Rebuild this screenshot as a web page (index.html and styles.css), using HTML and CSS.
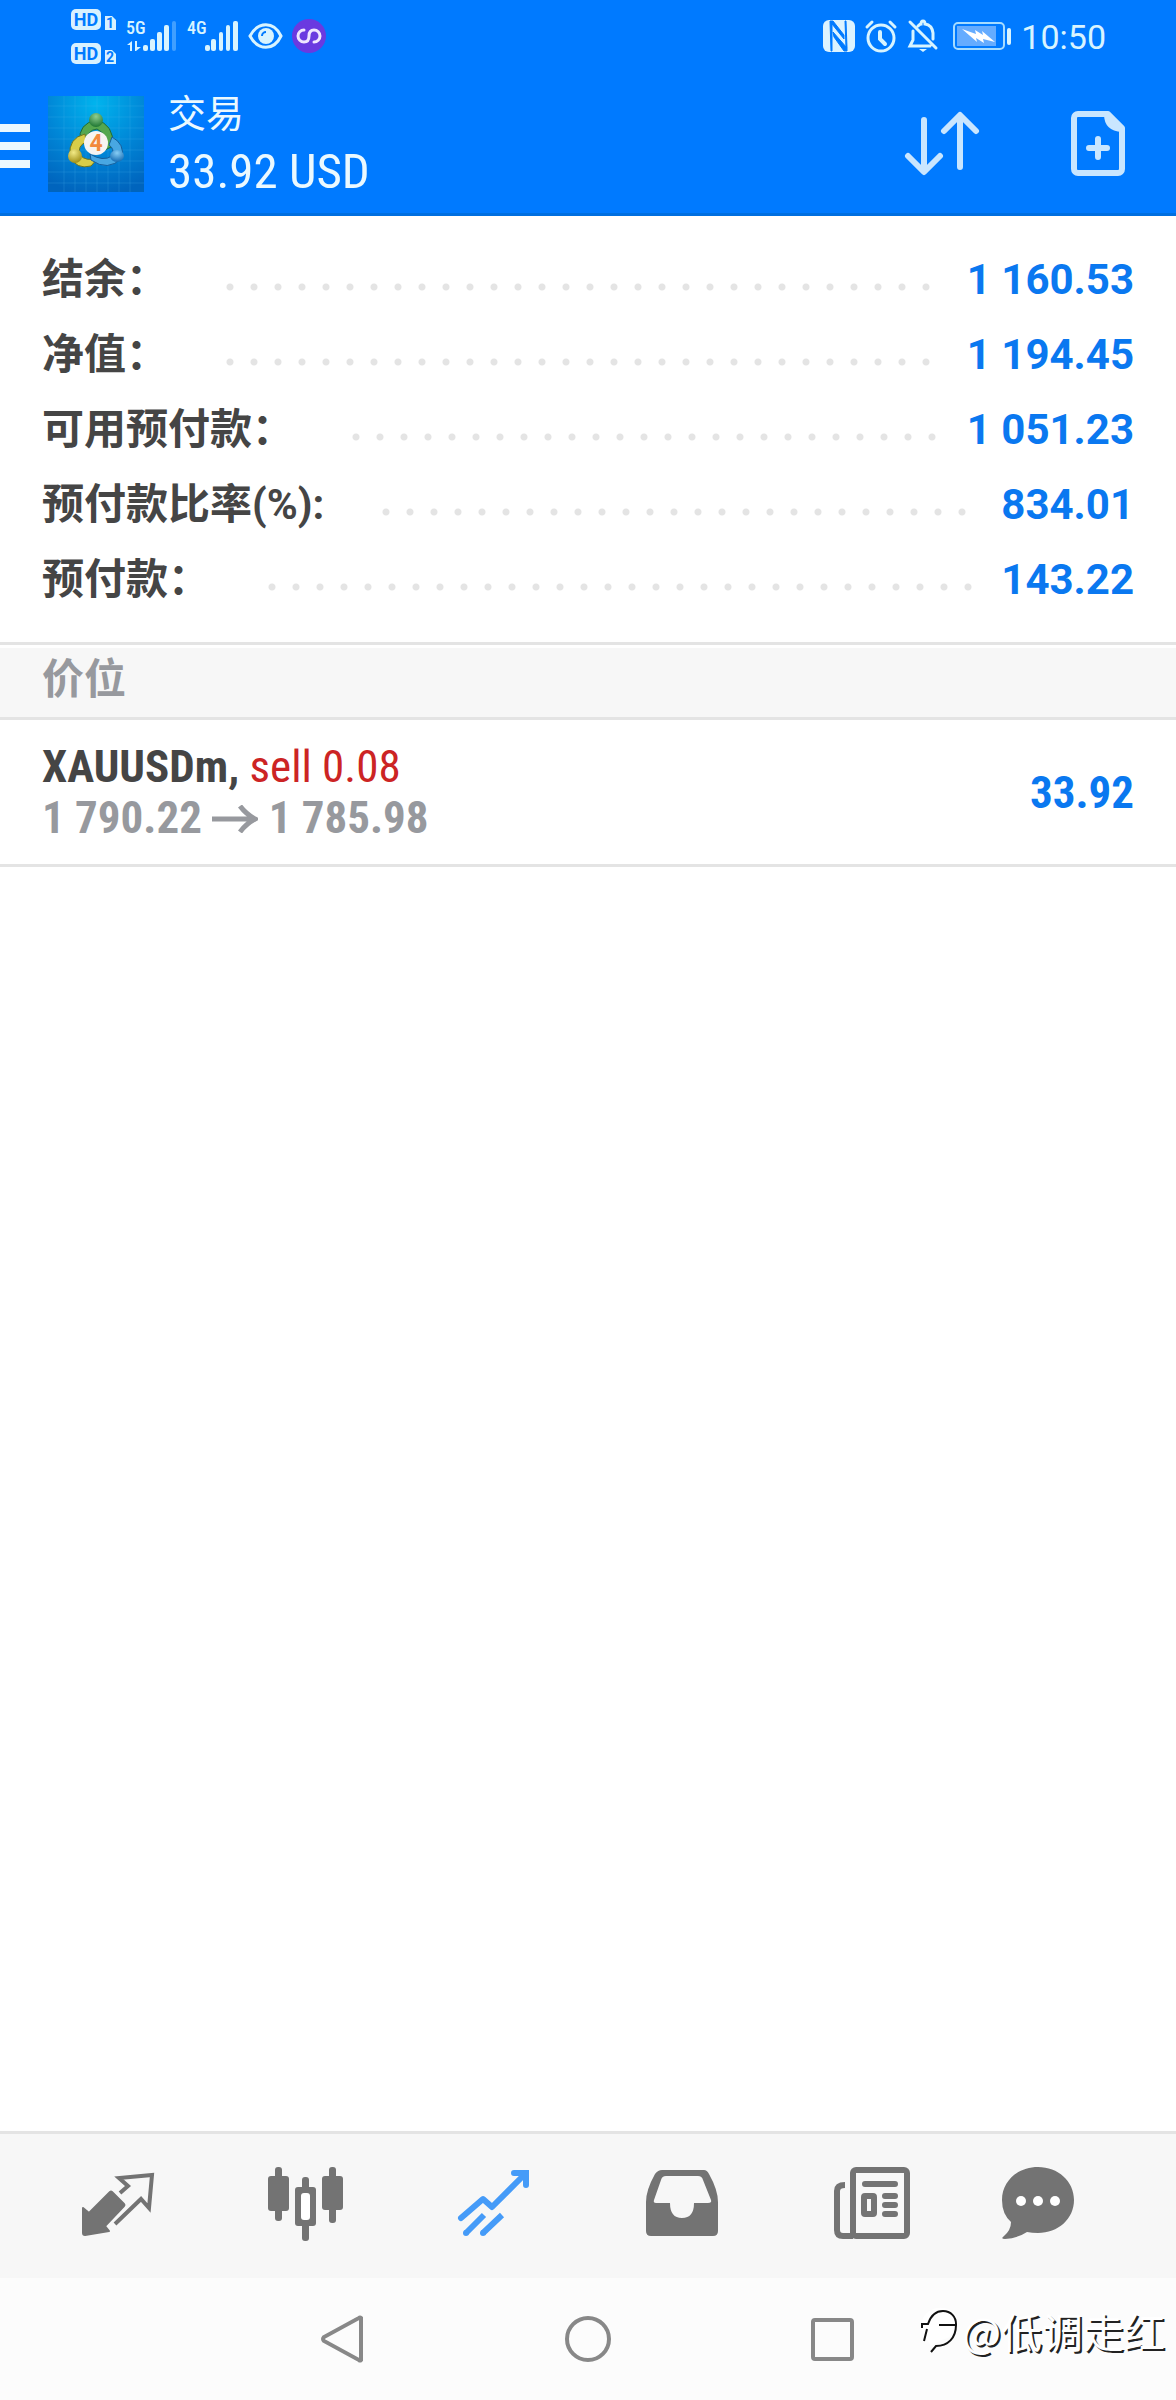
FILE: index.html
```html
<!DOCTYPE html>
<html lang="zh-CN">
<head>
<meta charset="utf-8">
<meta name="viewport" content="width=device-width, initial-scale=1">
<title>交易</title>
<link rel="stylesheet" href="styles.css">
</head>
<body>
<header class="top">
  <div class="status">
    <div class="status-group">
      <svg class="hd" width="48" height="60" viewBox="0 0 48 60" aria-hidden="true">
        <rect x="1" y="3" width="30" height="21" rx="5" fill="#d8f1ff"/>
        <text x="16" y="20" class="hd-text">HD</text>
        <path d="M35 10h7l4 4v10H35z" fill="#d8f1ff"/>
        <text x="40" y="22" class="hd-num">1</text>
        <rect x="1" y="37" width="30" height="21" rx="5" fill="#d8f1ff"/>
        <text x="16" y="54" class="hd-text">HD</text>
        <path d="M35 44h7l4 4v10H35z" fill="#d8f1ff"/>
        <text x="40" y="56" class="hd-num">2</text>
      </svg>
      <svg width="52" height="48" viewBox="0 -8 52 48" fill="#d8f4ff" aria-hidden="true">
        <text x="0" y="14" class="net-text">5G</text>
        <path d="M1 25l5-4v10H4v-6zM9 21h2v6h4l-5 4H9z"/>
        <rect x="17" y="25" width="5" height="6" rx="2"/>
        <rect x="24" y="19" width="5" height="12" rx="2"/>
        <rect x="31" y="12" width="5" height="19" rx="2"/>
        <rect x="38" y="5" width="5" height="26" rx="2"/>
        <rect x="46" y="1" width="4" height="30" rx="2" opacity=".3"/>
      </svg>
      <svg width="54" height="48" viewBox="0 -8 54 48" fill="#d8f4ff" aria-hidden="true">
        <text x="1" y="14" class="net-text">4G</text>
        <rect x="19" y="25" width="5" height="6" rx="2"/>
        <rect x="25" y="19" width="5" height="12" rx="2"/>
        <rect x="33" y="12" width="4" height="19" rx="2"/>
        <rect x="40" y="5" width="4" height="26" rx="2"/>
        <rect x="47" y="1" width="5" height="30" rx="2"/>
      </svg>
      <svg width="36" height="32" viewBox="0 0 36 32" aria-hidden="true">
        <path d="M2 16C10 1 26 1 33 16C26 31 10 31 2 16z" fill="none" stroke="#d8f4ff" stroke-width="3"/>
        <circle cx="18" cy="16" r="8" fill="#d8f4ff"/>
        <path d="M14 16a4 4 0 0 1 4-4" fill="none" stroke="#007aff" stroke-width="2"/>
      </svg>
      <svg width="34" height="34" viewBox="0 0 34 34" aria-hidden="true">
        <circle cx="17" cy="17" r="17" fill="#6a3ae0"/>
        <path d="M12 11a6 6 0 0 0 0 12q5 0 5-6t5-6a6 6 0 0 1 0 12" fill="none" stroke="#efe6ff" stroke-width="3" stroke-linecap="round"/>
      </svg>
    </div>
    <div class="status-group">
      <svg width="32" height="32" viewBox="0 0 32 32" aria-hidden="true">
        <rect x="0" y="0" width="32" height="32" rx="6" fill="#dcf3ff"/>
        <path d="M7 1h3l11 14v4L9 4v27H8zM10 12l14 16v3h-3L11 17zM22 1h1l1 27h-1z" fill="#007aff" stroke="#007aff"/>
      </svg>
      <svg width="36" height="34" viewBox="0 0 36 34" fill="none" stroke="#d8f4ff" stroke-width="3" stroke-linecap="round" aria-hidden="true">
        <circle cx="18" cy="19" r="13"/>
        <path d="M17 13v7l5 5" stroke-width="4"/>
        <path d="M4 8l5-5M32 8l-5-5"/>
      </svg>
      <svg width="32" height="34" viewBox="0 0 32 34" fill="none" stroke="#d8f4ff" stroke-width="3" stroke-linecap="round" aria-hidden="true">
        <path d="M11 7Q13 5 14 5Q14 2 16 2t2 3Q25 6 26 14v6M6 12v9l-3 6h20M3 3l26 26"/>
        <path d="M12 30h8l-4 3z" fill="#d8f4ff" stroke="none"/>
      </svg>
      <svg width="66" height="28" viewBox="0 0 66 28" aria-hidden="true">
        <rect x="7" y="1" width="50" height="26" rx="4" fill="none" stroke="#a6dcff" stroke-width="2"/>
        <rect x="10" y="4" width="39" height="20" fill="#65acff"/>
        <path d="M15 7l14 5-1-4 8 5-1-4 13 11-12-3 1 4-8-5 1 4z" fill="#fff"/>
        <rect x="60" y="6" width="4" height="17" rx="2" fill="#d8f4ff"/>
      </svg>
      <time class="clock">10:50</time>
    </div>
  </div>
  <div class="appbar">
    <button class="icon-btn menu" aria-label="菜单">
      <svg width="30" height="44" viewBox="0 0 30 44" fill="#ebf8ff"><path d="M0 0h30v8H0zM0 18h30v8H0zM0 36h30v8H0z"/></svg>
    </button>
    <svg class="logo" width="96" height="96" viewBox="0 0 96 96" aria-hidden="true">
      <defs>
        <radialGradient id="sky" cx=".5" cy=".08" r=".95"><stop offset="0" stop-color="#00b4ee"/><stop offset=".55" stop-color="#0085d6"/><stop offset="1" stop-color="#0064bd"/></radialGradient>
        <radialGradient id="green" cx=".5" cy=".25" r=".8"><stop offset="0" stop-color="#8fce90"/><stop offset="1" stop-color="#17702c"/></radialGradient>
        <radialGradient id="yellow" cx=".4" cy=".25" r=".8"><stop offset="0" stop-color="#f2ea86"/><stop offset="1" stop-color="#9b8a10"/></radialGradient>
        <radialGradient id="blue" cx=".5" cy=".25" r=".8"><stop offset="0" stop-color="#86cdf5"/><stop offset="1" stop-color="#0d64ae"/></radialGradient>
      </defs>
      <rect width="96" height="96" fill="url(#sky)"/>
      <path d="M16 0v96M27 0v96M38 0v96M49 0v96M60 0v96M71 0v96M82 0v96M0 10h96M0 21h96M0 32h96M0 43h96M0 54h96M0 65h96M0 76h96M0 87h96" stroke="#48b8f0" stroke-opacity=".22"/>
      <path d="M32 45Q30 28 48 24Q66 28 65 50L57 54Q60 38 49 33Q39 34 38 46z" fill="#55a74f" stroke="#1c6b38"/>
      <path d="M37 38Q20 42 22 60Q28 74 43 70L50 62Q38 66 32 59Q29 50 38 46z" fill="#d8cd48" stroke="#6c741e"/>
      <path d="M64 41Q77 48 74 62Q60 76 43 64L42 58Q55 66 64 60Q67 53 61 49z" fill="#48a7e2" stroke="#155d9a"/>
      <circle cx="48" cy="24" r="7" fill="url(#green)"/>
      <circle cx="27" cy="60" r="7" fill="url(#yellow)"/>
      <ellipse cx="69" cy="60" rx="7" ry="6" fill="url(#blue)"/>
      <circle cx="48" cy="47" r="12" fill="#f6f4f1"/>
      <text x="48" y="55" class="logo-num">4</text>
    </svg>
    <div class="heading">
      <h1 class="title">交易</h1>
      <p class="profit">33.92 USD</p>
    </div>
    <div class="actions">
      <button class="icon-btn" aria-label="排序">
        <svg width="76" height="68" viewBox="0 0 76 68" fill="none" stroke="#c9e6ff" stroke-width="6" stroke-linecap="round" stroke-linejoin="round"><path d="M20 10v51M4 46l16 16l16-16M56 57V6M40 21L56 5l16 16"/></svg>
      </button>
      <button class="icon-btn" aria-label="新订单">
        <svg width="56" height="68" viewBox="0 0 56 68" fill="none" stroke="#c9e6ff" stroke-width="6" stroke-linejoin="round"><path d="M8 4h30l14 14v41a4 4 0 0 1-4 4H8a4 4 0 0 1-4-4V8a4 4 0 0 1 4-4z"/><path d="M34 4q0 17 18 18V17L39 4z" fill="#c9e6ff" stroke="none"/><path d="M28 29v18M19 38h18" stroke-linecap="round"/></svg>
      </button>
    </div>
  </div>
</header>

<main class="content">
  <dl class="summary">
    <div class="row"><dt>结余：</dt><dd>1 160.53</dd></div>
    <div class="row"><dt>净值：</dt><dd>1 194.45</dd></div>
    <div class="row"><dt>可用预付款：</dt><dd>1 051.23</dd></div>
    <div class="row"><dt>预付款比率(%):</dt><dd>834.01</dd></div>
    <div class="row"><dt>预付款：</dt><dd>143.22</dd></div>
  </dl>
  <h2 class="section">价位</h2>
  <article class="position">
    <div class="deal">
      <p class="line symbol">XAUUSDm, <span class="sell">sell 0.08</span></p>
      <p class="line prices">1 790.22
        <svg class="arrow" width="46" height="28" viewBox="0 0 46 28" role="img" aria-label="至"><path d="M0 14h42M28 1q6 8 15 13q-9 5-15 13" fill="none" stroke="currentColor" stroke-width="5"/></svg>
        1 785.98</p>
    </div>
    <p class="gain">33.92</p>
  </article>
</main>

<nav class="tabs" aria-label="主导航">
  <a class="tab" href="#quotes" aria-label="行情">
    <svg width="80" height="80" viewBox="0 0 80 80"><path d="M5 42l6 5 21-21q1-1 2 0l12 12q1 1 0 2L27 60l4 5-24 4q-2 0-2-2z" fill="currentColor" stroke="currentColor" stroke-width="2" stroke-linejoin="round"/><path d="M37 58L63 33l8 9 3-33-33 3 9 8-8 7" fill="none" stroke="currentColor" stroke-width="4"/></svg>
  </a>
  <a class="tab" href="#chart" aria-label="图表">
    <svg width="80" height="80" viewBox="0 0 80 80" fill="currentColor"><rect x="9" y="1" width="7" height="54" rx="3"/><rect x="2" y="10" width="21" height="35" rx="3"/><rect x="36" y="11" width="7" height="64" rx="3"/><rect x="29" y="21" width="21" height="39" rx="3"/><rect x="35" y="27" width="9" height="27" rx="3" fill="#fff"/><rect x="63" y="1" width="7" height="56" rx="3"/><rect x="56" y="10" width="21" height="34" rx="3"/></svg>
  </a>
  <a class="tab active" href="#trade" aria-label="交易" aria-current="page">
    <svg width="80" height="80" viewBox="0 0 80 80" fill="none" stroke="currentColor" stroke-width="6"><path d="M7 52l22-19 9 8L71 8" stroke-linecap="round" stroke-linejoin="round"/><path d="M60 7h12v12" stroke-linecap="round"/><path d="M63 4h9q3 0 3 3v9z" fill="currentColor" stroke="none"/><path d="M12 67l18-18M29 67l19-18"/><circle cx="12" cy="67" r="3" fill="currentColor" stroke="none"/><circle cx="29" cy="67" r="3" fill="currentColor" stroke="none"/></svg>
  </a>
  <a class="tab" href="#history" aria-label="历史">
    <svg width="80" height="80" viewBox="0 0 80 80"><path fill="currentColor" fill-rule="evenodd" d="M20 4h42q3 0 5 4 9 16 9 28v29q0 5-5 5H9q-5 0-5-5V36Q4 24 13 8q3-4 7-4zM24 10q-4 0-5 4l-7 20q-1 3 2 3h14q0 15 12 15t12-15h14q4 0 3-3l-8-20q-1-4-5-4z"/></svg>
  </a>
  <a class="tab" href="#news" aria-label="新闻">
    <svg width="80" height="80" viewBox="0 0 80 80" fill="none" stroke="currentColor" stroke-width="6"><rect x="23" y="4" width="54" height="66" rx="3"/><path d="M15 19q-8 0-8 6v39q0 6 6 6h10"/><path d="M35 18h30M55 30h10M55 39h10M55 48h10" stroke-linecap="round"/><rect x="34" y="30" width="10" height="18" rx="1"/></svg>
  </a>
  <a class="tab" href="#chat" aria-label="消息">
    <svg width="80" height="80" viewBox="0 0 80 80"><path fill="currentColor" d="M40 1c20 0 36 14 36 33S60 67 40 67q-6 0-11-1-9 6-22 7-5 0-1-3 7-6 7-14Q4 48 4 34C4 15 20 1 40 1z"/><g fill="#fff"><circle cx="23" cy="35" r="5"/><circle cx="40" cy="35" r="5"/><circle cx="57" cy="35" r="5"/></g></svg>
  </a>
</nav>

<footer class="system">
  <div class="system-keys">
    <button class="icon-btn" aria-label="返回"><svg width="48" height="48" viewBox="0 0 48 48" class="key"><path d="M42 3v42q-1 1-2 0L5 26q-2-2 0-4L40 3q1-1 2 0z"/></svg></button>
    <button class="icon-btn" aria-label="主页"><svg width="48" height="48" viewBox="0 0 48 48" class="key"><circle cx="24" cy="24" r="21"/></svg></button>
    <button class="icon-btn" aria-label="最近任务"><svg width="48" height="48" viewBox="0 0 48 48" class="key"><rect x="4" y="5" width="39" height="39" rx="2"/></svg></button>
  </div>
  <div class="watermark">
    <svg width="42" height="48" viewBox="0 0 42 48" fill="none" aria-hidden="true"><path d="M24 2C10 0 0 12 3 24l9 16 10-6c22-4 22-30 2-32z" fill="#fff"/><path d="M3 22v-4h6C12 9 18 5 24 5c8 0 13 6 13 13M20 19h17c0 13-8 21-20 21l-5 6M8 23L5 35" stroke="#111" stroke-width="2"/></svg>
    <span>@低调走红</span>
  </div>
</footer>
</body>
</html>
```
FILE: styles.css
```css
* { box-sizing: border-box; margin: 0; }

body {
  display: flex;
  flex-direction: column;
  min-height: 100vh;
  background: #fff;
  color: #454545;
  font-family: Roboto, "Noto Sans CJK SC", sans-serif;
}

svg { display: block; flex: none; }

.icon-btn {
  display: block;
  padding: 0;
  border: 0;
  background: none;
}

/* Header */
.top {
  background: #007aff;
  border-bottom: 3px solid #006fe0;
  color: #ebf9ff;
}

.status {
  display: flex;
  justify-content: space-between;
  align-items: center;
  height: 72px;
  padding: 0 70px;
}

.status-group { display: flex; align-items: center; gap: 8px; }

.hd-text, .hd-num {
  fill: #007aff;
  font-weight: 700;
  text-anchor: middle;
}
.hd-text { font-size: 18px; }
.hd-num { font-size: 14px; }
.net-text { font-family: "Roboto Condensed", Roboto, sans-serif; font-size: 18px; font-weight: 500; }

.clock { padding-top: 2px; font-size: 34px; line-height: 40px; color: #d8f4ff; }

.appbar {
  display: flex;
  align-items: center;
  height: 141px;
  padding: 3px 50px 0 0;
}

.menu { padding-top: 4px; margin-right: 18px; }
.logo { margin-right: 24px; }
.logo-num { fill: #f28a3c; font-size: 23px; font-weight: 700; text-anchor: middle; }

.title { font-size: 38px; line-height: 56px; font-weight: 400; }
.profit {
  font-family: "Roboto Condensed", Roboto, sans-serif;
  font-size: 49px;
  line-height: 60px;
}

.actions { display: flex; align-items: center; gap: 90px; margin-left: auto; }

/* Account summary */
.summary {
  padding: 26px 42px 25px;
  line-height: 75px;
  border-bottom: 3px solid #e4e4e4;
}

.row {
  display: flex;
  font-size: 42px;
  font-weight: 700;
}

.row dt { order: 1; }
.row dd { order: 3; color: #0a78f0; }
.row::after {
  content: "";
  order: 2;
  flex: 1;
  height: 24px;
  margin: 33px 24px 0 50px;
  background: radial-gradient(circle, #e4e4e4 3px, transparent 4px) 0 0 / 24px 24px;
}

/* Positions */
.section {
  padding: 0 42px 6px;
  margin-top: 3px;
  background: #f7f7f7;
  border-bottom: 3px solid #e4e4e4;
  color: #97999e;
  font-size: 42px;
  line-height: 63px;
}

.position {
  display: flex;
  align-items: center;
  justify-content: space-between;
  padding: 21px 42px;
  border-bottom: 3px solid #e4e4e4;
  font-family: "Roboto Condensed", Roboto, "Noto Sans CJK SC", sans-serif;
  font-size: 45px;
  font-weight: 700;
}

.line { line-height: 51px; }
.sell { color: #cc2424; font-weight: 400; }
.prices { color: #97999e; }
.arrow { display: inline-block; }
.gain { color: #0a78f0; }

.content { flex: 1; }

/* Bottom tabs */
.tabs {
  display: grid;
  grid-template-columns: repeat(5, 188fr) 148fr;
  padding: 32px 64px 32px 24px;
  background: #f7f7f7;
  border-top: 3px solid #e4e4e4;
}

.tab { display: flex; justify-content: center; color: #737373; }
.tab.active { color: #459bf8; }

/* System keys */
.system {
  position: relative;
  display: flex;
  justify-content: center;
  padding: 37px 0;
  background: #fcfcfc;
}

.system-keys {
  display: grid;
  grid-template-columns: repeat(3, 1fr);
  justify-items: center;
  width: 62.5%;
}

.key { fill: none; stroke: #888; stroke-width: 4; }

.watermark {
  position: absolute;
  right: 11px;
  bottom: 46px;
  display: flex;
  align-items: center;
  gap: 1px;
  color: #fff;
  font-family: "Noto Sans CJK SC", sans-serif;
  font-size: 41px;
  line-height: 48px;
  text-shadow: 2px 2px 0 #222;
}
```
